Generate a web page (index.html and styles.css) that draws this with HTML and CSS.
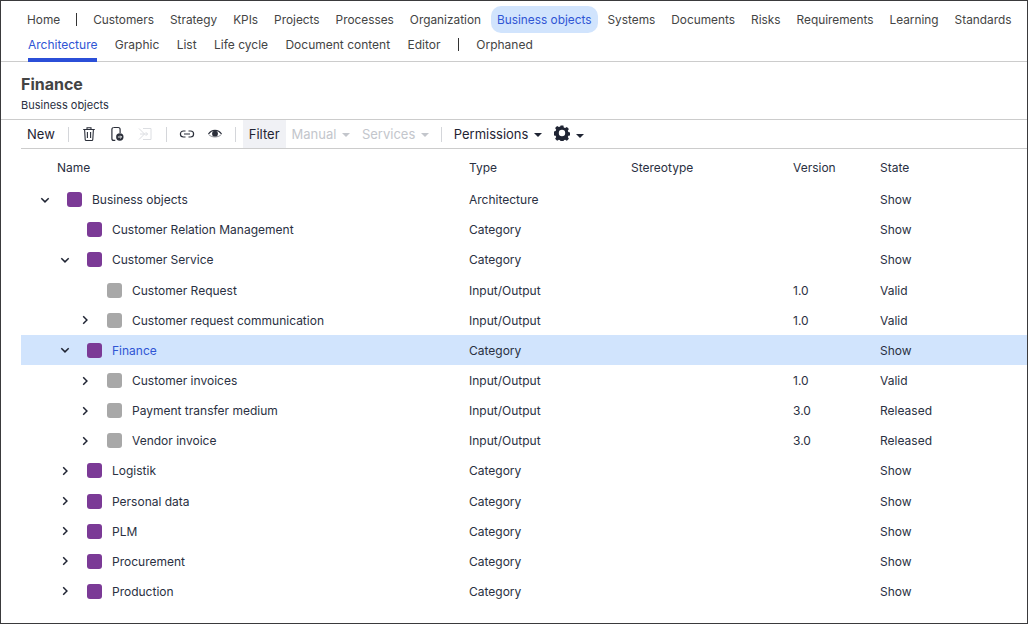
FILE: index.html
```html
<!DOCTYPE html>
<html lang="en">
<head>
    <meta charset="UTF-8">
    <title>Finance - Business objects</title>
    <link rel="stylesheet" href="styles.css">
</head>
<body>
    <svg class="icon-defs" width="0" height="0">
        <symbol id="chev-down" viewBox="0 0 10 10"><path d="M1.300 3.200L5 6.900l3.700-3.700" fill="none" stroke="#1f2433" stroke-width="1.500"/></symbol>
        <symbol id="chev-right" viewBox="0 0 10 10"><path d="M3.200 1.300L6.900 5 3.200 8.700" fill="none" stroke="#1f2433" stroke-width="1.500"/></symbol>
    </svg>
    <div class="window">
        <nav class="main-nav">
            <a class="nav-item">Home</a>
            <span class="nav-sep"></span>
            <a class="nav-item">Customers</a>
            <a class="nav-item">Strategy</a>
            <a class="nav-item">KPIs</a>
            <a class="nav-item">Projects</a>
            <a class="nav-item">Processes</a>
            <a class="nav-item">Organization</a>
            <a class="nav-item active">Business objects</a>
            <a class="nav-item">Systems</a>
            <a class="nav-item">Documents</a>
            <a class="nav-item">Risks</a>
            <a class="nav-item">Requirements</a>
            <a class="nav-item">Learning</a>
            <a class="nav-item">Standards</a>
        </nav>
        <nav class="sub-nav">
            <a class="tab active">Architecture</a>
            <a class="tab">Graphic</a>
            <a class="tab">List</a>
            <a class="tab">Life cycle</a>
            <a class="tab">Document content</a>
            <a class="tab">Editor</a>
            <span class="tab-sep"></span>
            <a class="tab">Orphaned</a>
        </nav>
        <header class="page-head">
            <h1>Finance</h1>
            <div class="page-sub">Business objects</div>
        </header>
        <div class="toolbar">
            <button class="tool text-tool new-btn">New</button>
            <span class="tool-sep"></span>
            <button class="tool icon-tool">
                <svg width="16" height="16" viewBox="0 0 16 16" fill="none" stroke="#2b2f3a" stroke-width="1.1"><path d="M2.200 3.500h11.600M6 3.300V1.700h4v1.600M3.600 3.500l.6 10c0 .6.500 1 1 1h5.600c.5 0 1-.4 1-1l.6-10M6.400 6v6M9.600 6v6"/></svg>
            </button>
            <button class="tool icon-tool">
                <svg width="16" height="16" viewBox="0 0 16 16"><path d="M5 1.500h4.200c1.200 0 1.900.8 1.900 2V7M6.300 14.400H4.800c-1.200 0-1.900-.8-1.900-2V3.500c0-1.200.7-2 1.900-2" fill="none" stroke="#2b2f3a" stroke-width="1.200"/><circle cx="10.800" cy="11" r="3.700" fill="#2b2f3a"/><path d="M8.900 11h3.600M11.200 9.600l1.400 1.400-1.400 1.400" fill="none" stroke="#fff" stroke-width=".9"/></svg>
            </button>
            <button class="tool icon-tool">
                <svg width="16" height="16" viewBox="0 0 16 16" fill="none" stroke="#dcdee2" stroke-width="1"><path d="M6 2.500h8v11H6M2 2.500l5.500 5.500L2 13.500M3 8h7.500M8.800 6.200l1.800 1.800-1.800 1.800"/></svg>
            </button>
            <span class="tool-sep second"></span>
            <button class="tool icon-tool">
                <svg width="16" height="16" viewBox="0 0 16 16" fill="none" stroke="#2b2f3a" stroke-width="1.2"><path d="M6.500 5H4.400a3 3 0 0 0 0 6h2.100M9.500 5h2.100a3 3 0 0 1 0 6H9.500M5 8h6"/></svg>
            </button>
            <button class="tool icon-tool">
                <svg width="16" height="16" viewBox="0 0 16 16"><path d="M1.500 8C3 5.600 5.200 4.300 8 4.300S13 5.600 14.500 8" fill="none" stroke="#2b2f3a" stroke-width="1.200"/><path d="M1.500 8.300C3 10 5.200 11 8 11s5-1 6.500-2.700" fill="none" stroke="#2b2f3a" stroke-width=".5"/><circle cx="8" cy="7.700" r="2.900" fill="#2b2f3a"/></svg>
            </button>
            <span class="tool-sep third"></span>
            <button class="tool text-tool filter-btn">Filter</button>
            <button class="tool text-tool disabled manual-btn">Manual<i class="caret"></i></button>
            <button class="tool text-tool disabled services-btn">Services<i class="caret"></i></button>
            <span class="tool-sep fourth"></span>
            <button class="tool text-tool perm-btn">Permissions<i class="caret"></i></button>
            <button class="tool text-tool gear-btn">
                <svg width="16" height="16" viewBox="0 0 16 16"><path fill-rule="evenodd" fill="#1f2433" d="M6.600.5h2.800l.4 2 1.300.6 1.800-1.100 2 2-1.100 1.800.6 1.300 2 .4v2.800l-2 .4-.6 1.300 1.100 1.800-2 2-1.800-1.100-1.300.6-.4 2H6.600l-.4-2-1.300-.6-1.800 1.100-2-2 1.100-1.800-.6-1.300-2-.4V6.500l2-.4.6-1.300L1.100 3l2-2 1.800 1.100 1.300-.6zM8 4.800a3.200 3.200 0 1 0 0 6.400 3.200 3.200 0 0 0 0-6.400z"/></svg>
                <i class="caret"></i>
            </button>
        </div>
        <div class="table">
            <div class="row head">
                <div class="cell name-head">Name</div>
                <div class="cell">Type</div>
                <div class="cell">Stereotype</div>
                <div class="cell">Version</div>
                <div class="cell">State</div>
            </div>
            <div class="row">
                <div class="cell name level-0"><svg class="chev"><use href="#chev-down"/></svg><span class="square purple"></span>Business objects</div>
                <div class="cell">Architecture</div><div class="cell"></div><div class="cell"></div><div class="cell">Show</div>
            </div>
            <div class="row">
                <div class="cell name level-1"><span class="chev"></span><span class="square purple"></span>Customer Relation Management</div>
                <div class="cell">Category</div><div class="cell"></div><div class="cell"></div><div class="cell">Show</div>
            </div>
            <div class="row">
                <div class="cell name level-1"><svg class="chev"><use href="#chev-down"/></svg><span class="square purple"></span>Customer Service</div>
                <div class="cell">Category</div><div class="cell"></div><div class="cell"></div><div class="cell">Show</div>
            </div>
            <div class="row">
                <div class="cell name level-2"><span class="chev"></span><span class="square grey"></span>Customer Request</div>
                <div class="cell">Input/Output</div><div class="cell"></div><div class="cell">1.0</div><div class="cell">Valid</div>
            </div>
            <div class="row">
                <div class="cell name level-2"><svg class="chev"><use href="#chev-right"/></svg><span class="square grey"></span>Customer request communication</div>
                <div class="cell">Input/Output</div><div class="cell"></div><div class="cell">1.0</div><div class="cell">Valid</div>
            </div>
            <div class="row selected">
                <div class="cell name level-1"><svg class="chev"><use href="#chev-down"/></svg><span class="square purple"></span><span class="sel-text">Finance</span></div>
                <div class="cell">Category</div><div class="cell"></div><div class="cell"></div><div class="cell">Show</div>
            </div>
            <div class="row">
                <div class="cell name level-2"><svg class="chev"><use href="#chev-right"/></svg><span class="square grey"></span>Customer invoices</div>
                <div class="cell">Input/Output</div><div class="cell"></div><div class="cell">1.0</div><div class="cell">Valid</div>
            </div>
            <div class="row">
                <div class="cell name level-2"><svg class="chev"><use href="#chev-right"/></svg><span class="square grey"></span>Payment transfer medium</div>
                <div class="cell">Input/Output</div><div class="cell"></div><div class="cell">3.0</div><div class="cell">Released</div>
            </div>
            <div class="row">
                <div class="cell name level-2"><svg class="chev"><use href="#chev-right"/></svg><span class="square grey"></span>Vendor invoice</div>
                <div class="cell">Input/Output</div><div class="cell"></div><div class="cell">3.0</div><div class="cell">Released</div>
            </div>
            <div class="row">
                <div class="cell name level-1"><svg class="chev"><use href="#chev-right"/></svg><span class="square purple"></span>Logistik</div>
                <div class="cell">Category</div><div class="cell"></div><div class="cell"></div><div class="cell">Show</div>
            </div>
            <div class="row">
                <div class="cell name level-1"><svg class="chev"><use href="#chev-right"/></svg><span class="square purple"></span>Personal data</div>
                <div class="cell">Category</div><div class="cell"></div><div class="cell"></div><div class="cell">Show</div>
            </div>
            <div class="row">
                <div class="cell name level-1"><svg class="chev"><use href="#chev-right"/></svg><span class="square purple"></span>PLM</div>
                <div class="cell">Category</div><div class="cell"></div><div class="cell"></div><div class="cell">Show</div>
            </div>
            <div class="row">
                <div class="cell name level-1"><svg class="chev"><use href="#chev-right"/></svg><span class="square purple"></span>Procurement</div>
                <div class="cell">Category</div><div class="cell"></div><div class="cell"></div><div class="cell">Show</div>
            </div>
            <div class="row">
                <div class="cell name level-1"><svg class="chev"><use href="#chev-right"/></svg><span class="square purple"></span>Production</div>
                <div class="cell">Category</div><div class="cell"></div><div class="cell"></div><div class="cell">Show</div>
            </div>
        </div>
    </div>
</body>
</html>
```

FILE: styles.css
```css
* {
    box-sizing: border-box;
}
html, body {
    margin: 0;
    height: 100%;
    overflow: hidden;
}
body {
    font-family: Inter, "Liberation Sans", sans-serif;
    font-size: 12px;
    color: #2a3042;
    background: #fff;
}
.icon-defs {
    position: absolute;
}
.window {
    height: 624px;
    border: 1px solid #3a3a3c;
    background: #fff;
}
.main-nav {
    display: flex;
    align-items: center;
    gap: 4px;
    height: 27px;
    margin-top: 5px;
    padding-left: 20px;
    font-size: 11.85px;
    color: #444;
}
.nav-item {
    display: block;
    padding: 2px 6px 0;
    line-height: 25px;
    white-space: nowrap;
}
.nav-item.active {
    background: #d1e4fd;
    color: #2f55d4;
    border-radius: 10px;
}
.nav-sep {
    width: 1px;
    height: 13px;
    margin: 0 6px;
    background: #333;
}
.sub-nav {
    display: flex;
    height: 29px;
    padding-left: 27px;
    gap: 17.4px;
    border-bottom: 1px solid #ccc;
    color: #444;
}
.tab {
    display: block;
    padding-top: 4px;
    line-height: 15px;
    white-space: nowrap;
}
.tab.active {
    color: #2f55d4;
    border-bottom: 4px solid #2b4fd8;
    height: 29px;
}
.tab-sep {
    width: 1px;
    height: 13px;
    margin-top: 5px;
    background: #333;
}
.page-head {
    height: 58px;
    padding: 12px 0 0 20px;
    border-bottom: 1px solid #ccc;
}
.page-head h1 {
    margin: 0;
    font-size: 16px;
    line-height: 20px;
    font-weight: 700;
    color: #444;
}
.page-sub {
    margin-top: 4px;
    font-size: 11px;
    line-height: 14px;
    color: #2a3042;
}
.toolbar {
    display: flex;
    align-items: center;
    height: 29px;
    margin-left: 20px;
    border-bottom: 1px solid #ccc;
}
.tool {
    display: flex;
    align-items: center;
    height: 28px;
    border: 0;
    padding: 0;
    background: none;
    font-family: inherit;
    font-size: 13px;
    color: #1f2433;
    white-space: nowrap;
}
.icon-tool {
    width: 16px;
    justify-content: center;
    margin-left: 12px;
}
.new-btn {
    margin-left: 6px;
}
.tool-sep {
    width: 1px;
    height: 15px;
    margin-left: 13px;
    background: #d4d6da;
}
.tool-sep.second {
    margin-left: 13px;
}
.tool-sep.third {
    margin-left: 12px;
}
.filter-btn {
    margin-left: 7px;
    padding: 0 6px;
    background: #f0f1f5;
}
.manual-btn {
    margin-left: 6px;
}
.services-btn {
    margin-left: 11.500px;
}
.tool-sep.fourth {
    margin-left: 11.500px;
}
.perm-btn {
    margin-left: 12px;
}
.gear-btn {
    margin-left: 12px;
    padding-bottom: 2px;
}
.disabled {
    color: #c3c6cc;
}
.caret {
    display: inline-block;
    width: 0;
    height: 0;
    margin-left: 6px;
    margin-top: 2px;
    border-left: 4px solid transparent;
    border-right: 4px solid transparent;
    border-top: 4px solid currentColor;
}
.gear-btn .caret {
    margin-top: 6px;
}
.table {
    margin-left: 20px;
    padding-top: 3px;
}
.row {
    display: grid;
    grid-template-columns: 448px 162px 162px 87px 1fr;
    align-items: center;
    height: 30.15px;
}
.row.head {
    height: 32.6px;
    padding-bottom: 1.6px;
}
.name-head {
    padding-left: 36px;
}
.cell {
    white-space: nowrap;
}
.name {
    display: flex;
    align-items: center;
}
.level-0 {
    padding-left: 19px;
}
.level-1 {
    padding-left: 39px;
}
.level-2 {
    padding-left: 59px;
}
.chev {
    display: block;
    flex: none;
    width: 10px;
    height: 10px;
}
.square {
    flex: none;
    width: 15px;
    height: 15px;
    margin: 0 10px 0 17px;
    border-radius: 3px;
}
.square.purple {
    background: #7b3a96;
}
.square.grey {
    background: #a8a8a8;
}
.row.selected {
    background: #d1e4fd;
}
.sel-text {
    color: #2f55d4;
}
```
